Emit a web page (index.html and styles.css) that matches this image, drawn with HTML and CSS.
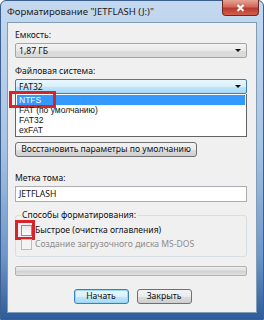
FILE: index.html
```html
<!DOCTYPE html>
<html lang="ru">
<head>
    <meta charset="UTF-8">
    <meta name="viewport" content="width=device-width, initial-scale=1.0">
    <title>Форматирование</title>
    <link rel="stylesheet" href="styles.css">
</head>
<body>
    <div class="window">
        <div class="titlebar">
            <span class="title">Форматирование "JETFLASH (J:)"</span>
            <span class="close">
                <svg width="9" height="8" viewBox="0 0 9 8">
                    <path d="M1.5 1 L7.5 7 M7.5 1 L1.5 7" stroke="#fff" stroke-width="2"/>
                </svg>
            </span>
        </div>
        <div class="client">
            <div class="label">Емкость:</div>
            <div class="combo">
                <span>1,87 ГБ</span>
                <span class="arrow"></span>
            </div>

            <div class="label">Файловая система:</div>
            <div class="combo focused">
                <span>FAT32</span>
                <span class="arrow"></span>
            </div>
            <ul class="droplist">
                <li class="selected"><span>NTFS</span><span class="mark wide"></span></li>
                <li>FAT (по умолчанию)</li>
                <li>FAT32</li>
                <li>exFAT</li>
            </ul>

            <div class="btn restore">Восстановить параметры по умолчанию</div>

            <div class="label">Метка тома:</div>
            <div class="textbox">JETFLASH</div>

            <fieldset class="group">
                <legend>Способы форматирования:</legend>
                <div class="check">
                    <span class="box"></span>
                    <span>Быстрое (очистка оглавления)</span>
                    <span class="mark small"></span>
                </div>
                <div class="check disabled">
                    <span class="box"></span>
                    <span>Создание загрузочного диска MS-DOS</span>
                </div>
            </fieldset>

            <div class="progress"></div>

            <div class="actions">
                <div class="btn default">Начать</div>
                <div class="btn">Закрыть</div>
            </div>
        </div>
    </div>
</body>
</html>
```

FILE: styles.css
```css
body {
    margin: 0;
    font-family: "Noto Sans", "Open Sans", sans-serif;
    font-size: 8.6px;
    color: #111;
}

.window {
    width: 264px;
    height: 320px;
    box-sizing: border-box;
    padding: 0 6px 6px 6px;
    border: 1px solid #3b5f8e;
    border-radius: 6px 6px 0 0;
    background: linear-gradient(#c4d9ef, #a8c4e4 45%, #6f97c9 80%, #2e5b9a);
    display: flex;
    flex-direction: column;
}

.titlebar {
    height: 21px;
    display: flex;
    align-items: flex-start;
    position: relative;
}

.title {
    margin-top: 4px;
    font-size: 9.5px;
    color: #1a1a1a;
}

.close {
    position: absolute;
    top: -1px;
    right: -2px;
    width: 35px;
    height: 15px;
    border: 1px solid #6b2a28;
    border-top: none;
    border-radius: 0 0 4px 4px;
    background: linear-gradient(#e8a493, #d0685a 45%, #b93a2c 55%, #d2604d);
    display: flex;
    align-items: center;
    justify-content: center;
}

.client {
    flex: 1;
    background: #f0f0f0;
    border: 1px solid #7f9db9;
    padding: 6px 9px 0 7px;
    display: flex;
    flex-direction: column;
}

.label {
    height: 12px;
    line-height: 12px;
    margin-bottom: 2px;
}

.combo {
    height: 13px;
    border: 1px solid #a5a5a5;
    border-radius: 2px;
    background: linear-gradient(#f4f4f4, #e9e9e9 50%, #dcdcdc 51%, #d9d9d9);
    display: flex;
    align-items: center;
    justify-content: space-between;
    padding: 0 5px 0 3px;
    margin-bottom: 7px;
}

.combo.focused {
    border-color: #3c7fb1;
    background: linear-gradient(#eaf6fd, #d9f0fc 50%, #bee6fd 51%, #a7d9f5);
    margin-bottom: 0;
}

.arrow {
    width: 0;
    height: 0;
    border-left: 3px solid transparent;
    border-right: 3px solid transparent;
    border-top: 3px solid #111;
}

.droplist {
    list-style: none;
    margin: 0 0 5px 0;
    padding: 1px;
    background: #fff;
    border: 1px solid #646464;
    border-top: none;
    font-family: "Liberation Sans", Arial, sans-serif;
    font-size: 8.5px;
}

.droplist li {
    height: 10px;
    line-height: 10px;
    padding-left: 2px;
    position: relative;
}

.droplist li.selected {
    background: #3399ff;
    color: #fff;
}

.mark {
    position: absolute;
    border: 3px solid #d8232a;
}

.mark.wide {
    left: -8px;
    top: -4px;
    width: 41px;
    height: 11px;
}

.btn {
    height: 13px;
    line-height: 13px;
    border: 1px solid #707070;
    border-radius: 3px;
    background: linear-gradient(#f2f2f2, #ebebeb 50%, #dddddd 51%, #cfcfcf);
    text-align: center;
}

.btn.restore {
    width: 180px;
    margin-bottom: 15px;
}

.textbox {
    height: 14px;
    line-height: 14px;
    border: 1px solid #abadb3;
    background: #fff;
    padding-left: 3px;
    margin-bottom: 7px;
}

.group {
    margin: 0;
    padding: 2px 6px 5px 5px;
    border: 1px solid #d5dfe5;
    border-radius: 3px;
}

.group legend {
    padding: 0 1px;
    margin-left: 0;
}

.check {
    display: flex;
    align-items: center;
    gap: 3px;
    height: 14px;
    position: relative;
}

.check .box {
    width: 9px;
    height: 9px;
    border: 1px solid #8f8f8f;
    background: linear-gradient(#e6e6e6, #fdfdfd);
}

.check.disabled {
    color: #8d8d8d;
}

.check.disabled .box {
    border-color: #bcbcbc;
    background: #f4f4f4;
}

.mark.small {
    left: -6px;
    top: -3px;
    width: 14px;
    height: 14px;
}

.progress {
    height: 8px;
    margin-top: 9px;
    border: 1px solid #b2b2b2;
    border-radius: 2px;
    background: linear-gradient(#f0f0f0, #dcdcdc 50%, #cfcfcf 51%, #e2e2e2);
}

.actions {
    display: flex;
    justify-content: center;
    gap: 8px;
    margin-top: 13px;
    padding-left: 3px;
}

.actions .btn {
    width: 53px;
    height: 13px;
}

.btn.default {
    border-color: #3c7fb1;
    box-shadow: inset 0 0 0 1px #9cd7f5;
    background: linear-gradient(#eaf6fd, #d9f0fc 50%, #bee6fd 51%, #a7d9f5);
}
```
